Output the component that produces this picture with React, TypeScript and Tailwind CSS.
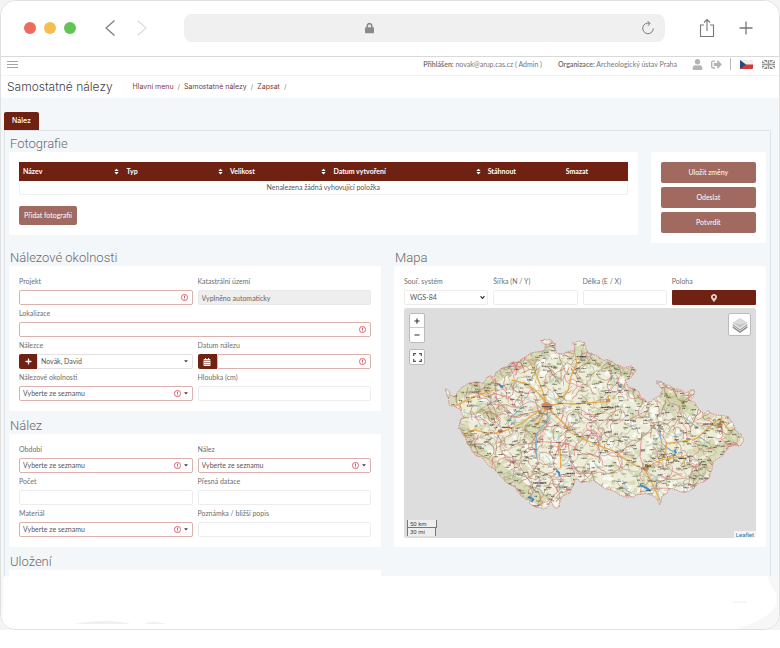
import React, { useId } from "react";
import {
  FaUser,
  FaSignOutAlt,
  FaPlus,
  FaMinus,
  FaCalendarAlt,
  FaLock,
  FaCaretDown,
  FaSort,
  FaMapMarkerAlt,
} from "react-icons/fa";

/* ---------- browser frame ---------- */

function BrowserBar() {
  return (
    <div className="flex h-14 items-center border-b border-[#d9d9d9] bg-white pb-px pl-[23px] pr-[26px] text-[#777]">
      <div className="flex gap-2">
        <span className="size-3 rounded-full bg-[#ee6a5e]" />
        <span className="size-3 rounded-full bg-[#f5bf4f]" />
        <span className="size-3 rounded-full bg-[#61c554]" />
      </div>
      <button aria-label="Zpět" className="ml-7">
        <svg className="h-[18px] w-3" viewBox="0 0 12 18" fill="none" stroke="#7c7c7c" strokeWidth="1.2">
          <path d="M10.500 1.500 2 9l8.500 7.500" />
        </svg>
      </button>
      <button aria-label="Vpřed" className="ml-5">
        <svg className="h-[18px] w-3" viewBox="0 0 12 18" fill="none" stroke="#dcdcdc" strokeWidth="1.2">
          <path d="M1.500 1.500 10 9l-8.500 7.500" />
        </svg>
      </button>
      <div className="ml-9 flex h-7 flex-1 items-center rounded-lg bg-[#f0f0f0] pr-[10px]">
        <div className="flex flex-1 justify-center pr-[87px]">
          <FaLock className="h-3 w-[9px] text-[#8a8a8a]" />
        </div>
        <button aria-label="Obnovit">
          <svg className="size-3.5" viewBox="0 0 14 14" fill="none" stroke="#777" strokeWidth="1">
            <path d="M8.500 2.300A5.300 5.300 0 1 0 12.300 7.500M6.500.2l2.600 2.100-2.200 2.600" />
          </svg>
        </button>
      </div>
      <button aria-label="Sdílet" className="ml-[34px]">
        <svg className="h-5 w-4" viewBox="0 0 16 20" fill="none" stroke="#777" strokeWidth="1.100">
          <path d="M5 7H1.500v11.500h13V7H11M8 13V1.500M5 4.500l3-3 3 3" />
        </svg>
      </button>
      <button aria-label="Nová karta" className="ml-6">
        <svg className="size-3.5" viewBox="0 0 14 14" fill="none" stroke="#777" strokeWidth="1.300">
          <path d="M7 .5v13M.5 7h13" />
        </svg>
      </button>
    </div>
  );
}

function CzechFlag() {
  return (
    <svg className="h-[9px] w-[13px]" viewBox="0 0 13 9">
      <rect width="13" height="9" rx="1" fill="#eee" />
      <path d="M0 4.500h13V8a1 1 0 0 1-1 1H0z" fill="#cf3b32" />
      <path d="M0 0l6 4.500L0 9z" fill="#27477f" />
    </svg>
  );
}

function BritishFlag() {
  return (
    <svg className="h-[9px] w-[13px]" viewBox="0 0 13 9">
      <rect width="13" height="9" rx="1" fill="#8b8b8b" />
      <path d="M0 0l13 9M13 0L0 9" stroke="#f1f1f1" strokeWidth="1.500" />
      <path d="M6.500 0v9M0 4.500h13" stroke="#f1f1f1" strokeWidth="3" />
      <path d="M6.500 0v9M0 4.500h13" stroke="#9a9a9a" strokeWidth="1.400" />
    </svg>
  );
}

function TopBar() {
  return (
    <div className="flex h-[19px] items-center border-b border-[#f3f3f3] bg-white pl-[6px] pr-1 pb-1 text-[7px] text-[#777]">
      <button aria-label="Nabídka" className="flex w-[11px] flex-col gap-[2px]">
        <span className="h-px bg-[#a5a5a5]" />
        <span className="h-px bg-[#a5a5a5]" />
        <span className="h-px bg-[#a5a5a5]" />
      </button>
      <p className="ml-auto">
        <b>Přihlášen:</b> novak@arup.cas.cz ( Admin )
      </p>
      <p className="ml-4">
        <b>Organizace:</b> Archeologický ústav Praha
      </p>
      <a href="#ucet" aria-label="Účet" className="ml-[15px]">
        <FaUser className="size-[11px] text-[#b4b4b4]" />
      </a>
      <a href="#odhlasit" aria-label="Odhlásit" className="ml-2">
        <FaSignOutAlt className="size-[11px] text-[#b4b4b4]" />
      </a>
      <span className="ml-2 h-3 w-px bg-[#bbb]" />
      <a href="#cs" aria-label="Čeština" className="ml-[9px]">
        <CzechFlag />
      </a>
      <a href="#en" aria-label="English" className="ml-[9px]">
        <BritishFlag />
      </a>
    </div>
  );
}

/* ---------- form parts ---------- */

function Section({ title, children }: { title: string; children: React.ReactNode }) {
  return (
    <section>
      <h2 className="h-[21px] pl-px pt-1 font-['Roboto',sans-serif] text-[13px] font-light leading-[17px] text-[#6a6a6a]">
        {title}
      </h2>
      {children}
    </section>
  );
}

function ErrorMark({ className }: { className: string }) {
  return (
    <svg className={`pointer-events-none absolute top-1 size-[7px] ${className}`} viewBox="0 0 8 8" fill="none" stroke="#d3434b">
      <circle cx="4" cy="4" r="3.500" strokeWidth=".9" />
      <path d="M4 1.800v2.700M4 5.200v1" strokeWidth="1" />
    </svg>
  );
}

const box = "block h-[15px] w-full rounded-[2px] border bg-white px-[3px] text-[7px] leading-[13px] text-[#555] outline-none";
const plain = "border-[#ececec]";
const invalid = "border-[#dcb1ad]";

function Label({ id, children }: { id: string; children: React.ReactNode }) {
  return (
    <label htmlFor={id} className="block h-[17px] truncate pt-[3px] text-[7px] leading-[10px] text-[#6e6e6e]">
      {children}
    </label>
  );
}

function TextField({ label, required, wide }: { label: string; required?: boolean; wide?: boolean }) {
  const id = useId();
  return (
    <div className={wide ? "col-span-2" : ""}>
      <Label id={id}>{label}</Label>
      <div className="relative">
        <input id={id} className={`${box} ${required ? invalid : plain}`} />
        {required && <ErrorMark className="right-[5px]" />}
      </div>
    </div>
  );
}

function SelectField({ label }: { label: string }) {
  const id = useId();
  return (
    <div>
      <Label id={id}>{label}</Label>
      <div className="relative">
        <select id={id} className={`${box} ${invalid} appearance-none`}>
          <option>Vyberte ze seznamu</option>
        </select>
        <ErrorMark className="right-3" />
        <FaCaretDown className="pointer-events-none absolute right-1 top-1 size-[6px] text-[#444]" />
      </div>
    </div>
  );
}

function PersonField() {
  const id = useId();
  return (
    <div>
      <Label id={id}>Nálezce</Label>
      <div className="relative flex">
        <button aria-label="Přidat osobu" className="flex h-[15px] w-[18px] shrink-0 items-center justify-center rounded-l-[2px] bg-[#6f2112] text-white">
          <FaPlus className="size-[7px]" />
        </button>
        <select id={id} className={`${box} border-[#e2e2e2] appearance-none`}>
          <option>Novák, David</option>
        </select>
        <FaCaretDown className="pointer-events-none absolute right-1 top-1 size-[6px] text-[#444]" />
      </div>
    </div>
  );
}

function DateField() {
  const id = useId();
  return (
    <div>
      <Label id={id}>Datum nálezu</Label>
      <div className="relative flex">
        <button aria-label="Vybrat datum" className="flex h-[15px] w-[19px] shrink-0 items-center justify-center rounded-l-[2px] bg-[#6f2112] text-white">
          <FaCalendarAlt className="size-2" />
        </button>
        <input id={id} className={`${box} ${invalid}`} />
        <ErrorMark className="right-[5px]" />
      </div>
    </div>
  );
}

function AutoField() {
  const id = useId();
  return (
    <div>
      <Label id={id}>Katastrální území</Label>
      <input
        id={id}
        readOnly
        defaultValue="Vyplněno automaticky"
        className="block h-[15px] w-full rounded-[2px] border border-[#e8e8e8] bg-[#eee] px-[3px] text-[7px] leading-[13px] text-[#666] outline-none"
      />
    </div>
  );
}

const formCard = "grid grid-cols-2 gap-x-[5px] rounded-[2px] bg-white px-[10px] pb-[10px] pt-[7px]";

/* ---------- photographs table ---------- */

function PhotoTable() {
  const columns = [
    { name: "Název", width: "w-[17%]", sortable: true },
    { name: "Typ", width: "w-[17%]", sortable: true },
    { name: "Velikost", width: "w-[17%]", sortable: true },
    { name: "Datum vytvoření", width: "w-auto", sortable: true },
    { name: "Stáhnout", width: "w-[78px]", sortable: false },
    { name: "Smazat", width: "w-[66px]", sortable: false },
  ];
  return (
    <table className="w-full table-fixed border-separate border-spacing-0 text-[7px]">
      <thead>
        <tr className="h-[19px] bg-[#6f2112] text-left text-white">
          {columns.map((c) => (
            <th key={c.name} scope="col" className={`${c.width} py-0 pl-1 pr-[2px] font-bold`}>
              <span className="flex items-center justify-between">
                {c.name}
                {c.sortable && <FaSort className="size-[7px]" />}
              </span>
            </th>
          ))}
        </tr>
      </thead>
      <tbody>
        <tr className="h-[14px]">
          <td colSpan={6} className="border border-t-0 border-[#f0f0f0] p-0 text-center leading-[13px] text-[#555]">
            Nenalezena žádná vyhovující položka
          </td>
        </tr>
      </tbody>
    </table>
  );
}

/* ---------- map ---------- */

function seeded(seed: number) {
  let s = seed;
  return () => {
    s = (s * 1664525 + 1013904223) % 4294967296;
    return s / 4294967296;
  };
}

const BORDER: number[][] = [
  [150, 268], [162, 272], [168, 288], [180, 292], [186, 280], [200, 262], [230, 248], [262, 250], [275, 232],
  [300, 228], [318, 205], [345, 190], [370, 185], [395, 168], [430, 155], [450, 150], [455, 135], [437, 122],
  [450, 118], [472, 122], [480, 140], [482, 155], [505, 162], [520, 155], [538, 152], [532, 128], [550, 124],
  [570, 128], [570, 145], [580, 160], [600, 165], [620, 178], [640, 180], [665, 195], [690, 205], [710, 198],
  [724, 212], [710, 230], [690, 240], [700, 262], [725, 272], [740, 295], [758, 310], [775, 298], [792, 288],
  [804, 270], [785, 250], [790, 243], [815, 255], [845, 268], [860, 270], [870, 280], [898, 270], [895, 290],
  [880, 294], [905, 318], [925, 340], [940, 330], [960, 345], [1000, 350], [1015, 370], [1020, 390], [1040, 402],
  [1045, 425], [1030, 438], [1000, 440], [985, 465], [955, 485], [945, 520], [935, 540], [905, 555], [880, 575],
  [850, 572], [820, 568], [800, 590], [793, 615], [790, 600], [780, 592], [750, 580], [715, 592], [690, 590],
  [660, 575], [620, 560], [595, 540], [560, 548], [540, 538], [525, 580], [500, 590], [493, 622], [478, 622],
  [465, 605], [445, 628], [410, 615], [400, 598], [380, 590], [360, 560], [330, 545], [315, 525], [285, 500],
  [260, 470], [240, 465], [215, 430], [205, 405], [190, 385], [205, 350], [190, 325], [165, 318], [160, 295],
];

function jaggedBorder() {
  const rnd = seeded(11);
  let d = "";
  BORDER.forEach(([x, y], i) => {
    const [nx, ny] = BORDER[(i + 1) % BORDER.length];
    d += `${i ? "L" : "M"}${x} ${y}`;
    for (let k = 1; k < 3; k++) {
      d += `L${(x + ((nx - x) * k) / 3 + (rnd() - 0.5) * 8).toFixed(1)} ${(y + ((ny - y) * k) / 3 + (rnd() - 0.5) * 8).toFixed(1)}`;
    }
  });
  return d + "Z";
}

function buildWalks(seed: number, count: number, steps: number, stride: number) {
  const rnd = seeded(seed);
  let d = "";
  for (let i = 0; i < count; i++) {
    let x = 150 + rnd() * 895;
    let y = 115 + rnd() * 510;
    let a = rnd() * 6.283;
    d += `M${x.toFixed(1)} ${y.toFixed(1)}`;
    for (let k = 0; k < steps; k++) {
      a += (rnd() - 0.5) * 1.7;
      x += Math.cos(a) * stride;
      y += Math.sin(a) * stride;
      d += `L${x.toFixed(1)} ${y.toFixed(1)}`;
    }
  }
  return d;
}

function buildPatches(seed: number, count: number, size: number) {
  const rnd = seeded(seed);
  let d = "";
  for (let i = 0; i < count; i++) {
    const x = 150 + rnd() * 895;
    const y = 115 + rnd() * 510;
    for (let k = 0; k < 7; k++) {
      const a = (k / 7) * 6.283;
      const r = size * (0.35 + rnd());
      d += `${k ? "L" : "M"}${(x + Math.cos(a) * r * 1.3).toFixed(1)} ${(y + Math.sin(a) * r).toFixed(1)}`;
    }
    d += "Z";
  }
  return d;
}

function buildNames(seed: number, count: number, length: number) {
  const rnd = seeded(seed);
  let d = "";
  for (let i = 0; i < count; i++) {
    d += `M${(150 + rnd() * 895).toFixed(1)} ${(115 + rnd() * 510).toFixed(1)}h${(length * (0.6 + rnd() * 0.6)).toFixed(1)}`;
  }
  return d;
}

const OUTLINE = jaggedBorder();
const FOREST_RIM =
  "M165 300L200 275 265 255 330 210 400 178 460 150M545 140L560 165 640 195 700 215 710 245 750 310M800 260L810 290 850 300 900 335M1010 380L1020 420 970 455 930 500 890 545M200 370L225 430 280 480 340 530 400 580 450 605";

function CountryMap() {
  return (
    <svg className="absolute inset-0 size-full" viewBox="27 24 1056 690" preserveAspectRatio="xMidYMid meet" fill="none" role="img" aria-label="Mapa České republiky">
      <defs>
        <clipPath id="country">
          <path d={OUTLINE} />
        </clipPath>
      </defs>
      <g clipPath="url(#country)" strokeLinejoin="round">
        <path d={OUTLINE} fill="#eeedda" />
        <path d={buildPatches(5, 420, 9)} fill="#cdd3a5" opacity=".65" />
        <path d={buildPatches(9, 420, 8)} fill="#fff" opacity=".7" />
        <path d={FOREST_RIM} stroke="#c6cc99" strokeWidth="34" opacity=".55" />
        <path d="M830 290L820 320 870 310M380 380L440 370 400 420M900 460L960 430M250 320L300 350" stroke="#c3c994" strokeWidth="34" opacity=".5" />
        <path d={buildPatches(23, 520, 4)} fill="#b0ba80" opacity=".6" />
        <path d={buildWalks(31, 380, 6, 8)} stroke="#a59d84" strokeWidth="1.800" opacity=".8" />
        <path d={buildWalks(47, 320, 7, 9)} stroke="#ab6653" strokeWidth="2.200" opacity=".75" />
        <path d={buildWalks(53, 130, 8, 9)} stroke="#df7085" strokeWidth="2.400" opacity=".75" />
        <path d={buildWalks(61, 100, 5, 8)} stroke="#86bbd1" strokeWidth="2.400" opacity=".8" />
        <path
          d="M458 320L455 380 425 400 420 450 430 490 410 520M370 435L440 425 520 430 525 480 560 530M300 235L305 300 360 350 440 330M740 400L735 470 750 510M560 330L610 360 700 360 760 330"
          stroke="#d8707f"
          strokeWidth="2.500"
          opacity=".8"
        />
        <path
          d="M455 315L460 360 425 400 425 470M790 370L800 430 840 460M865 350L885 365 910 385M330 375L350 350 385 320"
          stroke="#76b4cf"
          strokeWidth="3"
        />
        <path d="M400 590l15 8-6 8M735 555l18 8 14 10M484 512l8 6 2 12M315 258l10 4M672 258l8 4M838 450l6 10" stroke="#3f8fd0" strokeWidth="6" />
        <path
          d="M205 405L222 394 240 390 272 398 300 400 318 396 345 386 380 370 405 350 432 334 455 318 440 290 418 268 390 250 350 240M455 318L480 345 515 378 560 415 610 436 660 455 690 478 720 495 750 508 770 548 795 600M750 508L772 492 800 480 832 474 865 470 870 500M455 318L500 310 540 312 590 308 640 305 640 285M480 300L505 288 520 270 528 230 545 190 540 160M800 480L812 455 815 430 860 424 905 415 940 385 975 355M455 318L440 350 420 385M490 430L497 460 497 505M975 355L1010 400M175 322L205 305 240 290 300 268M455 318L445 280 430 240 415 205 400 180"
          stroke="#e5a43a"
          strokeWidth="4"
          opacity=".85"
        />
        <path d="M438 312l18-6 18 8-5 14-18 4zM308 390l12-4 6 10-12 6zM742 502l14-3 6 10-14 5zM965 370l14 0 4 10-14 2zM632 296l14 0 0 10-12 2z" fill="#c9886e" />
        <path d={buildNames(71, 1050, 13)} stroke="#3f3d36" strokeWidth="3.400" strokeDasharray="3 1.200 4 1" opacity=".65" />
        <path d="M440 320h30M322 382h25M515 520h24M630 278h20M750 498h18M925 372h30M415 549h40M620 322h36M850 475h24M545 170h28" stroke="#222" strokeWidth="4" strokeDasharray="4 1" opacity=".7" />
      </g>
      <path d={OUTLINE} stroke="#d98288" strokeWidth="2.600" strokeDasharray="5 2.500" />
    </svg>
  );
}

function LayersIcon() {
  return (
    <svg className="size-4" viewBox="0 0 26 26">
      <path d="M1 14.500l12 8.500 12-8.500v3L13 26 1 17.500z" fill="#8a8a8a" />
      <path d="M1 11l12 8.500L25 11v3l-12 8.500L1 14z" fill="#a9a9a9" />
      <path d="M13 2L1 9.500 13 18l12-8.500z" fill="#c4c4c4" />
      <path d="M13 2L1 9.500l12 3 12-3z" fill="#dadada" />
    </svg>
  );
}

function MapCard() {
  const system = useId();
  return (
    <div className="rounded-[2px] bg-white px-[10px] pb-[9px] pt-[7px]">
      <div className="grid grid-cols-4 gap-x-[5px]">
        <div>
          <Label id={system}>Souř. systém</Label>
          <div className="relative">
            <select id={system} className={`${box} ${plain} appearance-none pl-[5px]`}>
              <option>WGS-84</option>
            </select>
            <svg className="pointer-events-none absolute right-[3px] top-[5px] size-[5px]" viewBox="0 0 6 6" fill="none" stroke="#333" strokeWidth="1.400">
              <path d="M.7 1.500 3 4l2.300-2.500" />
            </svg>
          </div>
        </div>
        <TextField label="Šířka (N / Y)" />
        <TextField label="Délka (E / X)" />
        <div>
          <Label id="poloha">Poloha</Label>
          <button id="poloha" className="flex h-[15px] w-full items-center justify-center rounded-[1px] bg-[#6f2112] text-[#e9d5d0]">
            <FaMapMarkerAlt className="size-2" />
          </button>
        </div>
      </div>
      <div className="relative mt-[3px] h-[230px] overflow-hidden rounded-[2px] bg-[#ddd]">
        <CountryMap />
        <div className="absolute left-[5px] top-[5px] flex w-4 flex-col rounded-[2px] border border-[#bbb] bg-white text-[#333]">
          <button aria-label="Přiblížit" className="flex h-[14px] items-center justify-center border-b border-[#ccc]">
            <FaPlus className="size-[6px]" />
          </button>
          <button aria-label="Oddálit" className="flex h-[14px] items-center justify-center">
            <FaMinus className="size-[6px]" />
          </button>
        </div>
        <button aria-label="Celá obrazovka" className="absolute left-[5px] top-[41px] flex size-4 items-center justify-center rounded-[2px] border border-[#bbb] bg-white">
          <svg className="size-[9px]" viewBox="0 0 9 9" fill="none" stroke="#555" strokeWidth="1.200">
            <path d="M.7 3V.7H3M6 .7h2.300V3M8.300 6v2.300H6M3 8.300H.7V6" />
          </svg>
        </button>
        <button aria-label="Vrstvy" className="absolute right-[5px] top-[5px] flex size-[23px] items-center justify-center rounded-[2px] border border-[#bbb] bg-white">
          <LayersIcon />
        </button>
        <div className="absolute bottom-[2px] left-[3px] font-['Roboto',sans-serif] text-[6px] leading-[7px] text-[#444]">
          <div className="h-2 w-[30px] border border-t-0 border-[#777] bg-white/50 pl-[2px]">50 km</div>
          <div className="h-2 w-[29px] border-x border-[#777] bg-white/50 pl-[2px]">30 mi</div>
        </div>
        <a href="#leaflet" className="absolute bottom-0 right-0 bg-white/70 px-[2px] font-['Roboto',sans-serif] text-[6px] leading-[7px] text-[#2a7ca8]">
          Leaflet
        </a>
      </div>
    </div>
  );
}

/* ---------- page ---------- */

const button = "rounded-[2px] bg-[#a06a61] text-[7px] text-white";

export default function App() {
  return (
    <div className="min-h-screen bg-white font-['Lato',sans-serif]">
      <div className="bg-[#f4f4f4]">
        <div className="overflow-hidden rounded-2xl border border-[#e0e0e0] bg-white">
          <BrowserBar />
          <TopBar />
          <header className="flex h-[22px] items-center bg-white pl-[6px] font-['Inter',sans-serif]">
            <h1 className="text-[12px] font-light text-[#444]">Samostatné nálezy</h1>
            <nav className="ml-5 flex gap-1 text-[7px] text-[#888]">
              <a href="#menu" className="text-[#7b3a3a]">Hlavní menu</a>
              <span>/</span>
              <a href="#nalezy" className="text-[#7b3a3a]">Samostatné nálezy</a>
              <span>/</span>
              <a href="#zapsat" className="text-[#7b3a3a]">Zapsat</a>
              <span>/</span>
            </nav>
          </header>
          <main className="bg-[#f3f7fa] pl-[3px] pr-2 pt-[14px]">
            <button className="block h-[18px] w-[35px] rounded-t-[2px] bg-[#6f2112] text-center font-['Inter',sans-serif] text-[7px] font-medium text-white">
              Nález
            </button>
            <div className="rounded-tr-[2px] border border-b-0 border-[#dde2e6] px-1">
              <div className="grid grid-cols-12 items-start gap-x-[13px]">
                <div className="col-span-10">
                  <Section title="Fotografie">
                    <div className="rounded-[2px] bg-white p-[10px]">
                      <PhotoTable />
                      <button className={`mt-[11px] h-[19px] w-[58px] ${button}`}>Přidat fotografii</button>
                    </div>
                  </Section>
                </div>
                <div className="col-span-2 mt-[21px] flex flex-col gap-1 rounded-[2px] bg-white px-[10px] py-[10px]">
                  <button className={`h-[21px] w-full ${button}`}>Uložit změny</button>
                  <button className={`h-[21px] w-full ${button}`}>Odeslat</button>
                  <button className={`h-[21px] w-full ${button}`}>Potvrdit</button>
                </div>
              </div>
              <div className="mt-[2px] grid grid-cols-2 items-start gap-x-[13px]">
                <div className="flex flex-col gap-[2px]">
                  <Section title="Nálezové okolnosti">
                    <div className={formCard}>
                      <TextField label="Projekt" required />
                      <AutoField />
                      <TextField label="Lokalizace" required wide />
                      <PersonField />
                      <DateField />
                      <SelectField label="Nálezové okolnosti" />
                      <TextField label="Hloubka (cm)" />
                    </div>
                  </Section>
                  <Section title="Nález">
                    <div className={formCard}>
                      <SelectField label="Období" />
                      <SelectField label="Nález" />
                      <TextField label="Počet" />
                      <TextField label="Přesná datace" />
                      <SelectField label="Materiál" />
                      <TextField label="Poznámka / bližší popis" />
                    </div>
                  </Section>
                  <Section title="Uložení">
                    <div className="h-1.5 bg-white" />
                  </Section>
                </div>
                <Section title="Mapa">
                  <MapCard />
                </Section>
              </div>
            </div>
          </main>
          <footer className="relative h-[53px] bg-[#f7f7f7]">
            <svg className="absolute inset-0 size-full" viewBox="0 0 778 53" preserveAspectRatio="none">
              <path d="M2 53V6Q2 0 8 0H767Q769 9 774 16 778 26 772 34 762 44 747 49L735 53Z" fill="#fff" />
              <path d="M73 48Q108 42 130 48ZM143 48Q149 44 166 48Z" fill="#f0f0f0" />
              <path d="M732 26h13" stroke="#ededed" />
            </svg>
          </footer>
        </div>
      </div>
    </div>
  );
}
